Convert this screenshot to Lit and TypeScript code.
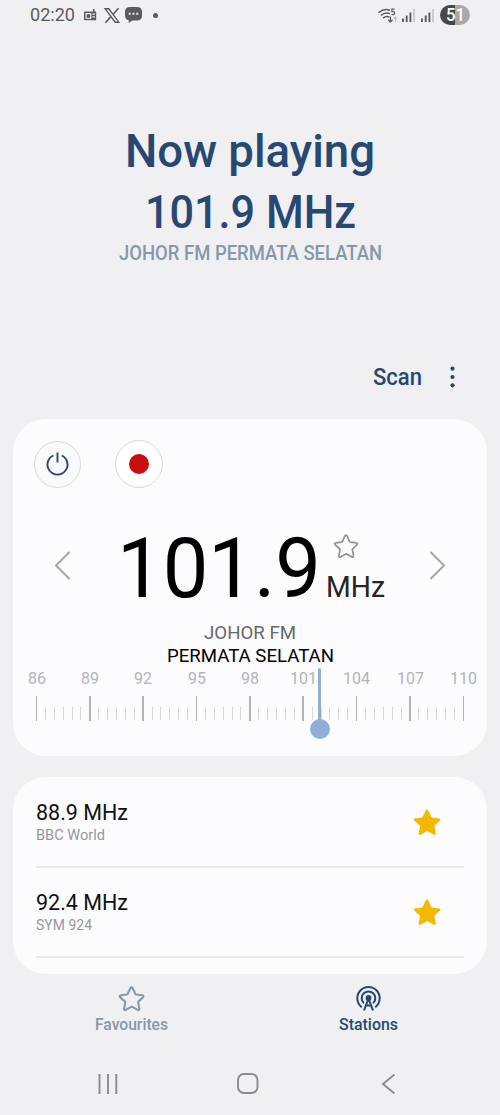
import { LitElement, html, css } from "lit";
import { customElement, property } from "lit/decorators.js";

const STAR =
  "M12 1.2c.5 0 .8.3 1 .7l2.7 5.7c.1.3.3.4.6.5l6.2.8c1 .1 1.3 1.1.6 1.8l-4.5 4.3c-.2.2-.3.5-.2.7l1.1 6.2c.2.9-.7 1.6-1.5 1.1l-5.4-3c-.3-.1-.5-.1-.8 0l-5.4 3c-.8.5-1.7-.2-1.5-1.1l1.1-6.2c.1-.2 0-.5-.2-.7L1 10.700c-.7-.7-.4-1.700.6-1.800l6.100-.8c.3-.1.5-.2.6-.5L11 1.900c.2-.4.5-.7 1-.7z";

/** One line of text set to a fixed measure, centred vertically on its capitals. */
@customElement("fit-text")
export class FitText extends LitElement {
  @property() text = "";
  @property({ type: Number }) width = 100;
  @property({ type: Number }) size = 16;

  static styles = css`
    :host { display: flex; align-items: center; flex: none; }
    svg { display: block; overflow: visible; fill: currentColor; }
  `;

  render() {
    return html`<svg width=${this.width} height=${this.size}>
      <text x="0" y=${this.size * 0.857} font-size=${this.size}
        textLength=${this.width} lengthAdjust="spacingAndGlyphs">${this.text}</text>
    </svg>`;
  }
}

@customElement("status-bar")
export class StatusBar extends LitElement {
  static styles = css`
    :host { display: flex; flex: none; height: 30px; align-items: center; padding: 0 30px; color: #5b5b5d; box-sizing: border-box; }
    svg { display: block; flex: none; overflow: visible; }
    .radio { margin-left: 9px; }
    .x { margin-left: 8px; }
    .chat { margin-left: 5px; }
    .dot { width: 5px; height: 5px; border-radius: 50%; background: currentColor; margin-left: 11px; }
    .wifi { margin-left: auto; }
    .signal { margin-left: 5px; }
    .signal + .signal { margin-left: 6px; }
    .battery { width: 30px; height: 20px; border-radius: 10px; margin-left: 6px; display: flex; justify-content: center;
      align-items: center; color: #fff; font-weight: 500; background: linear-gradient(90deg, #484848 51%, #a9a9ab 51%); }
    .battery fit-text { height: 18px; margin-bottom: 1px; }
  `;

  signal() {
    return html`<svg class="signal" width="13" height="14" viewBox="0 0 13 14">
      <path d="M1 10.500V14M4.700 7.500V14M8.400 4.500V14" stroke="#5b5b5d" stroke-width="1.900"/>
      <path d="M12 1V14" stroke="#c0c0c2" stroke-width="1.500"/>
    </svg>`;
  }

  render() {
    return html`
      <fit-text text="02:20" width="45" size="18"></fit-text>
      <svg class="radio" width="12" height="12" viewBox="0 0 12 12">
        <path fill="currentColor" fill-rule="evenodd" d="M1 2.500H9V0H10.500V2.500H11.500Q12.200 2.500 12.200 3.300V10.500Q12.200 11.300 11.400 11.300H.8Q0 11.300 0 10.500V3.500Q0 2.500 1 2.500zM1.500 4V9.800H7.300V4zM8.500 4.500V5.700H11V4.500zM8.500 7.300V8.500H11V7.300z"/>
        <circle cx="4.400" cy="6.900" r="2" fill="currentColor"/>
      </svg>
      <svg class="x" width="16" height="15" viewBox="0 0 16 15">
        <path d="M1.200 .8H4.800L14.800 14.200H11.200z" fill="none" stroke="currentColor" stroke-width="1.400"/>
        <path d="M14.500 .3L9.200 6.300M6.700 8.900L1.400 14.700" stroke="currentColor" stroke-width="1.600"/>
      </svg>
      <svg class="chat" width="17" height="16" viewBox="0 0 17 16">
        <path d="M5 0H12Q17 0 17 5V8.500Q17 13.500 12 13.500H7.500L3.500 16L3.800 13.300Q0 12.500 0 8.500V5Q0 0 5 0z" fill="currentColor"/>
        <path d="M3.700 6.800h2M7.500 6.800h2M11.300 6.800h2" stroke="#f0f0f2" stroke-width="2"/>
      </svg>
      <span class="dot"></span>
      <svg class="wifi" width="19" height="15" viewBox="0 0 19 15">
        <g fill="none" stroke="currentColor" stroke-width="1.500">
          <path d="M.5 4.800Q6 .1 12 2.200M2.800 7.500Q7 3.900 11.800 5.600M5 10.200Q8 7.700 11.300 9"/>
          <path d="M12.400 8.500V14M10.200 11.800L12.400 14L14.600 11.800" stroke-width="1.300"/>
          <path d="M17.500 14V9M15.800 10.800L17.500 9L19 10.800" stroke="#bcbcbe" stroke-width="1.100"/>
          <path d="M16.600 1.200H13.900V3.600H15.300Q16.700 3.600 16.700 5Q16.700 6.600 15.200 6.600H13.500" stroke-width="1.200"/>
        </g>
      </svg>
      ${this.signal()}${this.signal()}
      <div class="battery"><fit-text text="51" width="19" size="18"></fit-text></div>
    `;
  }
}

@customElement("frequency-scale")
export class FrequencyScale extends LitElement {
  @property({ type: Number }) value = 101.9;

  static styles = css`
    :host { display: block; position: relative; width: 427px; margin-left: 23.5px; color: #b4b4b6; }
    .labels { display: flex; justify-content: space-between; height: 18px; }
    .slot { width: 0; display: flex; justify-content: center; }
    .ticks { display: flex; justify-content: space-between; align-items: flex-end; height: 25px; margin-top: 9px; }
    .tick { width: 0; display: flex; justify-content: center; height: 14px; padding-bottom: 1px; box-sizing: border-box; }
    .tick::before { content: ""; flex: none; width: 1px; background: #d9d9db; }
    .tick.major { height: 25px; padding: 0; }
    .tick.major::before { width: 1.5px; background: #b4b4b6; }
    .needle { position: absolute; top: -1px; width: 20px; margin-left: -9.5px; display: flex; flex-direction: column; align-items: center; }
    .needle::before { content: ""; width: 3px; height: 52px; border-radius: 2px 2px 0 0; background: #92aed8; }
    .needle::after { content: ""; width: 20px; height: 20px; border-radius: 50%; background: #92aed8; margin-top: -1px; }
  `;

  render() {
    const marks = [86, 89, 92, 95, 98, 101, 104, 107, 110];
    const ticks = Array.from({ length: 49 }, (_, i) => i % 6 === 0);
    const left = ((this.value - 86) / 24) * 100;
    return html`
      <div class="labels">
        ${marks.map((m) => html`<div class="slot"><fit-text text=${m} width=${m > 99 ? 27 : 18} size="16"></fit-text></div>`)}
      </div>
      <div class="ticks">${ticks.map((major) => html`<i class="tick ${major ? "major" : ""}"></i>`)}</div>
      <div class="needle" style="left:${left}%"></div>
    `;
  }
}

@customElement("app-root")
export class AppRoot extends LitElement {
  static styles = css`
    :host { display: flex; flex-direction: column; width: 500px; height: 1115px; background: #f0f0f2; overflow: hidden;
      font-family: Roboto, "Noto Sans", sans-serif; color: #274872; }
    svg { display: block; flex: none; overflow: visible; }
    .hero { flex: none; display: flex; flex-direction: column; align-items: center; padding-top: 90px; height: 231px; }
    .hero .line { height: 60.5px; font-weight: 500; }
    .hero .station { height: 23px; color: #8797aa; font-weight: 500; }
    .toolbar { flex: none; display: flex; align-items: center; justify-content: flex-end; height: 51px; padding: 0 45px 17px 0; gap: 28px; font-weight: 500; }
    .card { flex: none; background: #fcfcfe; border-radius: 33px; margin: 0 13px; box-sizing: border-box; }
    .tuner { height: 337px; color: #000; }
    .buttons { display: flex; align-items: center; gap: 34px; padding: 21px 0 0 21px; height: 48px; }
    .round { display: flex; align-items: center; justify-content: center; border-radius: 50%; box-sizing: border-box;
      border: 1px solid #d8d8da; width: 47px; height: 47px; background: #fafafa; }
    .round.record { width: 48px; height: 48px; background: #fff; }
    .record-dot { width: 20px; height: 20px; border-radius: 50%; background: #c90c0c; }
    .dial { display: flex; height: 68px; margin-top: 46px; padding: 0 42px; }
    .dial .arrow { margin-top: 17px; }
    .big { margin-left: 47px; height: 66px; }
    .unit { display: flex; flex-direction: column; width: 64px; color: #252525; }
    .unit svg { margin: 0 0 0 13px; }
    .unit fit-text { margin: 12px 0 0 5px; height: 31px; }
    .dial .next { margin-left: auto; }
    .names { display: flex; flex-direction: column; align-items: center; margin-top: 19px; height: 48px; }
    .names fit-text { height: 23px; }
    .names .top { color: #686868; }
    frequency-scale { margin-top: 0; }
    .list { height: 197px; margin-top: 21px; padding: 0 23px; overflow: hidden; }
    .row { display: flex; align-items: center; justify-content: space-between; height: 90px; padding-right: 23px;
      box-sizing: border-box; }
    .row > svg { margin-bottom: 1px; }
    .divider { height: 2px; background: #e8e8ea; margin: -1px 0; }
    .freq { height: 25px; color: #111; }
    .name { height: 20px; color: #97979b; }
    .info { padding-bottom: 1px; }
    .tabs { flex: none; display: flex; height: 76px; }
    .tab { display: flex; flex-direction: column; align-items: center; width: 263px; padding-top: 12px; gap: 3px; color: #8797aa; font-weight: 500; }
    .tab + .tab { width: 211px; color: #274872; }
    .tab fit-text { height: 20px; }
    .system { flex: none; display: flex; justify-content: space-between; align-items: center; height: 65px; padding: 2px 105px 0 98px; box-sizing: border-box; }
    .home { margin-right: 5px; }
  `;

  star(size: number, stroke: string, fill = "none", width = 1.8) {
    return html`<svg width=${size} height=${size} viewBox="0 0 24 24">
      <path d=${STAR} fill=${fill} stroke=${stroke} stroke-width=${width} stroke-linejoin="round"/>
    </svg>`;
  }

  arrow(path: string, cls: string) {
    return html`<svg class="arrow ${cls}" width="15" height="28" viewBox="0 0 15 28">
      <path d=${path} fill="none" stroke="#a6a6a8" stroke-width="2" stroke-linecap="round" stroke-linejoin="round"/>
    </svg>`;
  }

  row(freq: string, name: string, nameWidth: number) {
    return html`<div class="row">
      <div class="info">
        <fit-text class="freq" text=${freq} width="92" size="22"></fit-text>
        <fit-text class="name" text=${name} width=${nameWidth} size="15"></fit-text>
      </div>
      ${this.star(28, "none", "#f3b800")}
    </div>
    <div class="divider"></div>`;
  }

  render() {
    return html`
      <status-bar></status-bar>
      <section class="hero">
        <fit-text class="line" text="Now playing" width="250" size="46.5"></fit-text>
        <fit-text class="line" text="101.9 MHz" width="211" size="46.5"></fit-text>
        <fit-text class="station" text="JOHOR FM PERMATA SELATAN" width="263" size="20"></fit-text>
      </section>
      <div class="toolbar">
        <fit-text text="Scan" width="49" size="23"></fit-text>
        <svg width="5" height="22" viewBox="0 0 5 22" fill="#274872">
          <circle cx="2.500" cy="2.700" r="2.100"/><circle cx="2.500" cy="11" r="2.100"/><circle cx="2.500" cy="19.300" r="2.100"/>
        </svg>
      </div>
      <section class="card tuner">
        <div class="buttons">
          <div class="round">
            <svg width="23" height="24" viewBox="0 0 23 24" fill="none" stroke="#274872" stroke-width="1.900">
              <path d="M7.300 3.500A10 10 0 1 0 15.700 3.500M11.500 .5V10.500"/>
            </svg>
          </div>
          <div class="round record"><span class="record-dot"></span></div>
        </div>
        <div class="dial">
          ${this.arrow("M14 1.500L1 14.500L14 27.500", "prev")}
          <fit-text class="big" text="101.9" width="204" size="84"></fit-text>
          <div class="unit">
            ${this.star(24, "#929294", "none", 1.7)}
            <fit-text text="MHz" width="59" size="30"></fit-text>
          </div>
          ${this.arrow("M1 1.500L14 14.500L1 27.500", "next")}
        </div>
        <div class="names">
          <fit-text class="top" text="JOHOR FM" width="92" size="19"></fit-text>
          <fit-text text="PERMATA SELATAN" width="167" size="19"></fit-text>
        </div>
        <frequency-scale .value=${101.9}></frequency-scale>
      </section>
      <section class="card list">
        ${this.row("88.9 MHz", "BBC World", 69)}
        ${this.row("92.4 MHz", "SYM 924", 56)}
      </section>
      <nav class="tabs">
        <div class="tab">${this.star(25, "#8797aa", "none", 2)}<fit-text text="Favourites" width="73" size="16"></fit-text></div>
        <div class="tab">
          <svg width="25" height="25" viewBox="0 0 25 25" fill="none" stroke="#274872" stroke-width="2" stroke-linecap="round">
            <path d="M5.200 20.700A11.200 11.200 0 1 1 19.800 20.700"/>
            <path d="M7.400 16.700A6.800 6.800 0 1 1 17.600 16.700"/>
            <path d="M12.500 12.500L8.300 23.700M12.500 12.500L16.700 23.700M10.500 19.500H14.500"/>
            <circle cx="12.500" cy="12" r="1.900" fill="#274872"/>
          </svg>
          <fit-text text="Stations" width="59" size="16"></fit-text>
        </div>
      </nav>
      <div class="system">
        <svg width="20" height="20" viewBox="0 0 20 20" stroke="#8c8c8e" stroke-width="1.900"><path d="M1.500 0V20M10 0V20M18.300 0V20"/></svg>
        <svg class="home" width="21" height="21" viewBox="0 0 21 21" fill="none" stroke="#8c8c8e" stroke-width="1.900"><rect x="1" y="1" width="19.500" height="19" rx="6"/></svg>
        <svg width="13" height="20" viewBox="0 0 13 20" fill="none" stroke="#8c8c8e" stroke-width="1.900"><path d="M12.500 .5L1 10L12.500 19.500"/></svg>
      </div>
    `;
  }
}
